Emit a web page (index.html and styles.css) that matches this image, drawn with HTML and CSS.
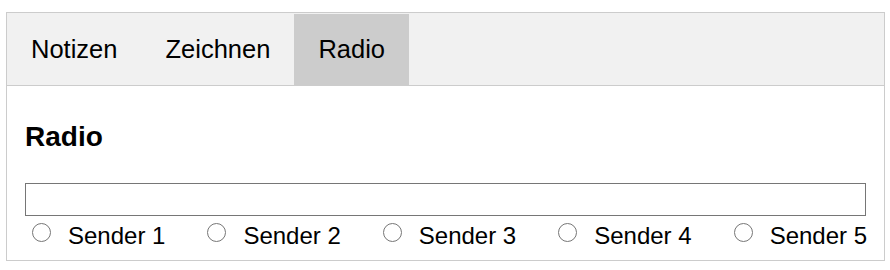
FILE: index.html
```html
<!DOCTYPE html>
<html lang="de">
<head>
    <meta charset="UTF-8">
    <meta name="viewport" content="width=device-width, initial-scale=1.0">
    <title>Radio</title>
    <link rel="stylesheet" href="styles.css">
</head>
<body>

    <!-- Tab-Leiste -->
    <div class="tab">
        <button class="tablinks">Notizen</button>
        <button class="tablinks">Zeichnen</button>
        <button class="tablinks active">Radio</button>
    </div>

    <div class="tabcontent">
        <h3>Radio</h3>
        <input type="text" class="station-url">
        <div class="stations">
            <label class="station"><input type="radio" name="sender">Sender 1</label>
            <label class="station"><input type="radio" name="sender">Sender 2</label>
            <label class="station"><input type="radio" name="sender">Sender 3</label>
            <label class="station"><input type="radio" name="sender">Sender 4</label>
            <label class="station"><input type="radio" name="sender">Sender 5</label>
        </div>
    </div>

</body>
</html>
```

FILE: styles.css
```css
body {
    font-family: "Liberation Sans", Arial, sans-serif;
    margin: 12px 5px 0 6px;
    color: #000;
}
.tab {
    display: flex;
    padding-top: 1px;
    border: 1px solid #ccc;
    background-color: #f1f1f1;
}
.tab button {
    background-color: inherit;
    border: none;
    outline: none;
    padding: 21px 24px;
    font-family: inherit;
    font-size: 25.5px;
    line-height: 29px;
    color: #000;
    cursor: pointer;
}
.tab button:hover {
    background-color: #ddd;
}
.tab button.active {
    background-color: #ccc;
}
.tabcontent {
    padding: 9px 18px 10px;
    border: 1px solid #ccc;
    border-top: none;
}
.tabcontent h3 {
    font-size: 28px;
    line-height: 32px;
    margin: 26px 0 30px;
}
.station-url {
    display: block;
    box-sizing: border-box;
    width: 100%;
    height: 33px;
    margin: 0;
    border: 1px solid #767676;
    font-size: 20px;
}
.stations {
    display: flex;
    gap: 35px;
    margin-top: 6px;
}
.station {
    display: flex;
    flex: none;
    align-items: flex-start;
    font-size: 24px;
}
.station input {
    width: 19px;
    height: 19px;
    margin: 1px 17px 0 7px;
}
```
